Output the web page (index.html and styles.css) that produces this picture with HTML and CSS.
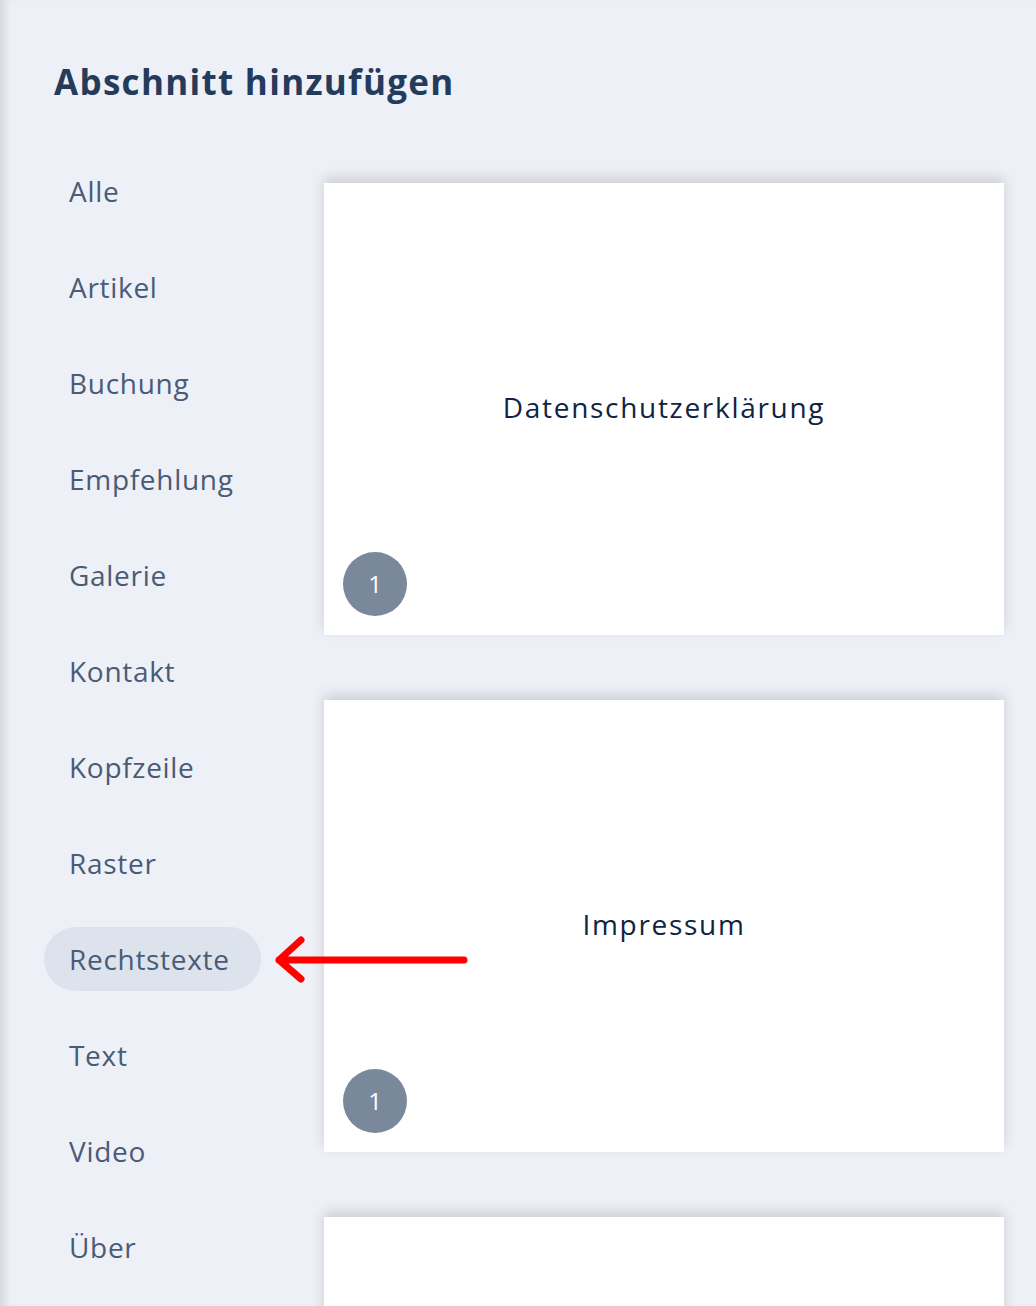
FILE: index.html
```html
<!DOCTYPE html>
<html lang="de">
<head>
  <meta charset="UTF-8">
  <meta name="viewport" content="width=device-width, initial-scale=1">
  <title>Abschnitt hinzufügen</title>
  <link rel="stylesheet" href="styles.css">
</head>
<body>
  <div class="panel">
    <h1 class="title">Abschnitt hinzufügen</h1>

    <div class="content">
      <div class="nav">
        <a href="#">Alle</a>
        <a href="#">Artikel</a>
        <a href="#">Buchung</a>
        <a href="#">Empfehlung</a>
        <a href="#">Galerie</a>
        <a href="#">Kontakt</a>
        <a href="#">Kopfzeile</a>
        <a href="#">Raster</a>
        <a href="#" class="active">Rechtstexte</a>
        <a href="#">Text</a>
        <a href="#">Video</a>
        <a href="#">Über</a>
      </div>

      <div class="cards">
        <div class="card">
          <span class="card-label">Datenschutzerklärung</span>
          <span class="badge">1</span>
        </div>
        <div class="card">
          <span class="card-label">Impressum</span>
          <span class="badge">1</span>
        </div>
        <div class="card"></div>
      </div>

      <svg class="arrow" width="200" height="50" viewBox="0 0 200 50">
        <path d="M6 25 H191 M28 5 L6 25 L28 44" fill="none" stroke="#ff0000" stroke-width="7" stroke-linecap="round" stroke-linejoin="round"/>
      </svg>
    </div>
  </div>
</body>
</html>
```

FILE: styles.css
```css
body {
  margin: 0;
  font-family: 'Open Sans', sans-serif;
  background: #edf0f6;
  overflow: hidden;
}

.panel {
  height: 1306px;
  overflow: hidden;
  box-shadow: inset 10px 0 10px -6px rgba(0,0,0,0.12);
}

.title {
  margin: 0;
  padding: 58px 0 0 54px;
  font-size: 35px;
  font-weight: 700;
  letter-spacing: 1.3px;
  color: #253b5b;
  line-height: 48px;
}

.content {
  position: relative;
  display: flex;
  padding: 54px 32px 0 44px;
}

.nav {
  width: 280px;
  display: flex;
  flex-direction: column;
  gap: 32px;
  margin-top: -1px;
}

.nav a {
  align-self: flex-start;
  height: 64px;
  line-height: 64px;
  padding: 0 31px 0 25px;
  border-radius: 32px;
  font-size: 28px;
  color: #4a5b76;
  text-decoration: none;
  letter-spacing: 0.7px;
}

.nav a.active {
  background: #dce3ed;
}

.cards {
  display: flex;
  flex-direction: column;
  gap: 65px;
  padding-top: 23px;
}

.card {
  position: relative;
  flex-shrink: 0;
  width: 680px;
  height: 452px;
  background: white;
  box-shadow: 0 -5px 12px rgba(0,0,0,0.14);
  display: flex;
  align-items: center;
  justify-content: center;
}

.card-label {
  font-size: 28px;
  letter-spacing: 1.7px;
  color: #0f2442;
  margin-top: -4px;
}

.badge {
  position: absolute;
  left: 19px;
  bottom: 19px;
  width: 64px;
  height: 64px;
  border-radius: 50%;
  background: #7a889c;
  color: white;
  font-size: 24px;
  line-height: 64px;
  text-align: center;
}

.arrow {
  position: absolute;
  left: 273px;
  top: 829px;
}
```
